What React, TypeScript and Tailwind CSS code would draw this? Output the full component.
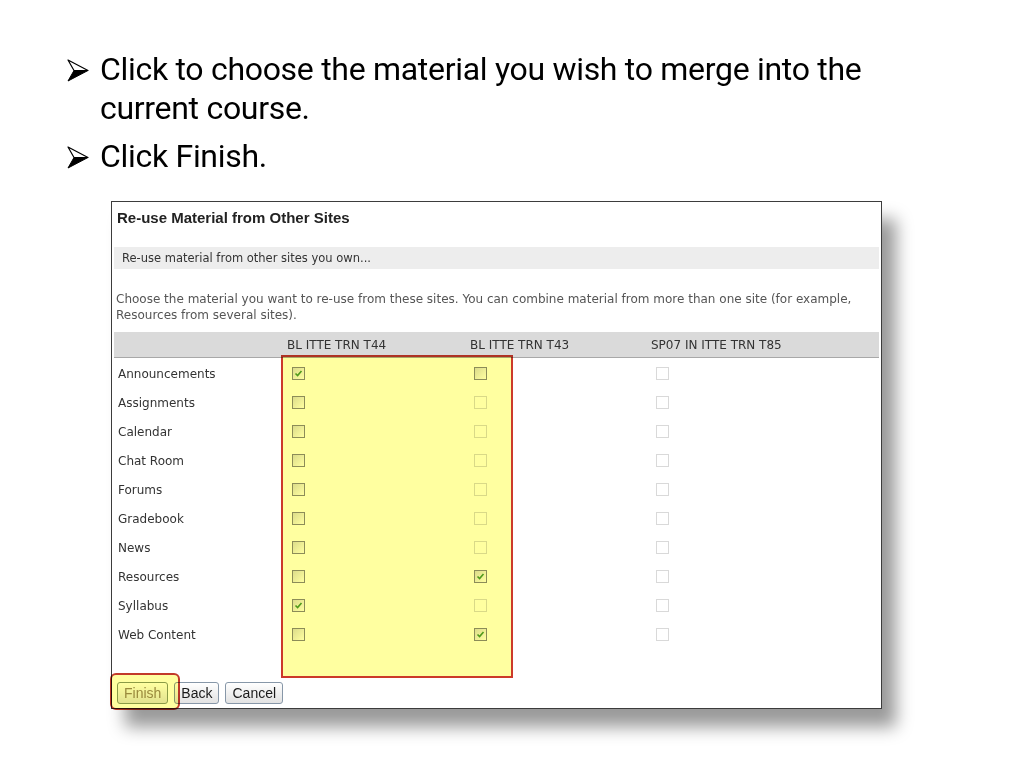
import React from 'react';

type Box = 'on' | 'off' | 'dis';

const rows: { label: string; c: Box[] }[] = [
  { label: 'Announcements', c: ['on', 'off', 'dis'] },
  { label: 'Assignments', c: ['off', 'dis', 'dis'] },
  { label: 'Calendar', c: ['off', 'dis', 'dis'] },
  { label: 'Chat Room', c: ['off', 'dis', 'dis'] },
  { label: 'Forums', c: ['off', 'dis', 'dis'] },
  { label: 'Gradebook', c: ['off', 'dis', 'dis'] },
  { label: 'News', c: ['off', 'dis', 'dis'] },
  { label: 'Resources', c: ['off', 'on', 'dis'] },
  { label: 'Syllabus', c: ['on', 'dis', 'dis'] },
  { label: 'Web Content', c: ['off', 'on', 'dis'] },
];

const Arrow = () => (
  <svg width="22" height="23" viewBox="0 0 22 23" className="shrink-0">
    <path d="M1 1 L21 11.5 L7 11.5 Z" fill="#fff" stroke="#000" strokeWidth="1.2" strokeLinejoin="round" />
    <path d="M7 11.5 L21 11.5 L1 22 Z" fill="#000" stroke="#000" strokeWidth="1" strokeLinejoin="round" />
  </svg>
);

const Check = ({ s }: { s: Box }) => {
  const enabled = s !== 'dis';
  return (
    <span
      className={`relative inline-block w-[13px] h-[13px] border ${
        enabled ? 'border-[#8c8c8c] bg-gradient-to-br from-[#dcdcdc] to-[#ffffff]' : 'border-[#d9d9d9] bg-white'
      }`}
    >
      {s === 'on' && (
        <svg className="absolute left-[1px] top-[1px]" width="9" height="9" viewBox="0 0 9 9">
          <path d="M1.5 4.5 L3.6 6.6 L7.5 2" fill="none" stroke="#4f9a2a" strokeWidth="1.6" />
        </svg>
      )}
    </span>
  );
};

const Btn = ({ children, dim }: { children: React.ReactNode; dim?: boolean }) => (
  <button
    className={`h-[22px] px-[6px] rounded-[3px] border bg-gradient-to-b from-[#ffffff] to-[#e2e2e2] text-[14px] leading-[18px] ${
      dim ? 'text-[#9a8a60] border-[#8a9a70]' : 'text-[#1a1a1a] border-[#8797a8]'
    }`}
    style={{ fontFamily: '"Liberation Sans", Arial, sans-serif' }}
  >
    {children}
  </button>
);

export default function App() {
  return (
    <div className="w-[1024px] h-[768px] bg-white overflow-hidden relative">
      <div
        className="pt-[50px] pl-[67px] text-[32px] text-black tracking-[-0.3px]"
        style={{ fontFamily: 'Roboto, "Open Sans", sans-serif' }}
      >
        <div className="flex leading-[39px]">
          <span className="w-[33px] shrink-0 pt-[9px]">
            <Arrow />
          </span>
          <div>
            Click to choose the material you wish to merge into the
            <br />
            current course.
          </div>
        </div>
        <div className="flex leading-[39px] mt-[9px]">
          <span className="w-[33px] shrink-0 pt-[9px]">
            <Arrow />
          </span>
          <div>Click Finish.</div>
        </div>
      </div>

      <div
        className="ml-[111px] mt-[25px] w-[771px] h-[508px] border border-[#3c3c3c] bg-white relative shadow-[14px_18px_16px_rgba(0,0,0,0.4)]"
        style={{ fontFamily: '"DejaVu Sans", Verdana, sans-serif' }}
      >
        <div
          className="pl-[5px] pt-[8px] text-[15px] font-bold leading-[16px] text-[#222]"
          style={{ fontFamily: '"Liberation Sans", Arial, sans-serif' }}
        >
          Re-use Material from Other Sites
        </div>
        <div className="mx-[2px] mt-[21px] h-[22px] bg-[#ededed] pl-[8px] text-[11.5px] leading-[22px] text-[#333]">
          Re-use material from other sites you own...
        </div>
        <div className="mt-[22px] pl-[4px] pr-[6px] text-[12px] leading-[16px] text-[#555]">
          Choose the material you want to re-use from these sites. You can combine material from more than one site (for example,
          Resources from several sites).
        </div>

        <div className="mx-[2px] mt-[9px] h-[26px] bg-[#dadada] border-b border-[#a8a8a8] grid grid-cols-[173px_183px_181px_1fr] items-center text-[12px] text-[#333]">
          <span />
          <span>BL ITTE TRN T44</span>
          <span>BL ITTE TRN T43</span>
          <span>SP07 IN ITTE TRN T85</span>
        </div>

        <div className="mx-[2px] mt-[1px]">
          {rows.map((r) => (
            <div key={r.label} className="h-[29px] grid grid-cols-[173px_183px_181px_1fr] items-center text-[12px] text-[#333]">
              <span className="pl-[4px]">{r.label}</span>
              <span className="pl-[5px] flex">
                <Check s={r.c[0]} />
              </span>
              <span className="pl-[4px] flex">
                <Check s={r.c[1]} />
              </span>
              <span className="pl-[5px] flex">
                <Check s={r.c[2]} />
              </span>
            </div>
          ))}
        </div>

        <div className="mt-[33px] pl-[5px] flex gap-[6px]">
          <Btn dim>Finish</Btn>
          <Btn>Back</Btn>
          <Btn>Cancel</Btn>
        </div>

        {/* highlights */}
        <div className="absolute left-[169px] top-[153px] w-[232px] h-[323px] border-2 border-[#cc3a2a] bg-[#ffffa0] mix-blend-multiply" />
        <div className="absolute left-[-2px] top-[471px] w-[70px] h-[37px] rounded-[6px] border-2 border-[#c23a2a] bg-[#ffffa0] mix-blend-multiply" />
      </div>
    </div>
  );
}
